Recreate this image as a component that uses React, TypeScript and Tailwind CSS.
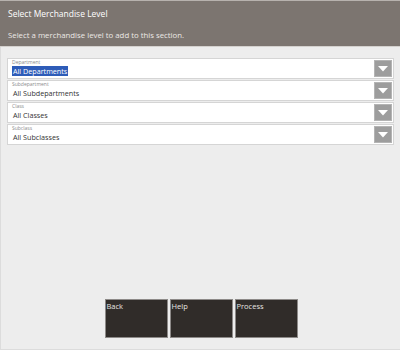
import React from "react";

const FIELDS = [
  { label: "Department", value: "All Departments", selected: true },
  { label: "Subdepartment", value: "All Subdepartments" },
  { label: "Class", value: "All Classes" },
  { label: "Subclass", value: "All Subclasses" },
];

const BUTTONS = ["Back", "Help", "Process"];

export default function App() {
  return (
    <div
      className="w-[400px] h-[350px] flex flex-col bg-[#ededed] overflow-hidden"
      style={{ fontFamily: '"Open Sans", "Noto Sans", sans-serif' }}
    >
      {/* Header */}
      <div className="h-[1px] bg-[#b7b2ae]" />
      <div className="h-[45px] bg-[#7c7570] px-[8px] flex flex-col">
        <div className="text-[8.5px] leading-none text-white font-medium mt-[9px]">Select Merchandise Level</div>
        <div className="text-[7.8px] leading-none text-[#ece9e6] mt-[13px]">
          Select a merchandise level to add to this section.
        </div>
      </div>
      <div className="h-[1px] bg-[#d4d1ce]" />

      {/* Body */}
      <div className="flex-1 flex flex-col border-l border-b border-[#dcdcdc]">
        <div className="flex flex-col gap-[1px] mt-[11px] pl-[6px] pr-[6px]">
          {FIELDS.map((f) => (
            <div
              key={f.label}
              className="h-[21px] bg-white border border-[#d5d5d5] flex items-center pl-[4px] pr-[1px]"
            >
              <div className="flex-1 flex flex-col">
                <span className="text-[5px] leading-none text-[#8a8a8a] -mt-[2px]">{f.label}</span>
                <span className="text-[7.2px] leading-none mt-[3px]">
                  <span className={f.selected ? "bg-[#2e5cb8] text-white px-[1px]" : "text-[#333] px-[1px]"}>
                    {f.value}
                  </span>
                </span>
              </div>
              <div className="w-[18px] h-[17px] bg-[#9d9d9d] border border-[#b4b4b4] flex items-center justify-center">
                <svg width="10" height="6" viewBox="0 0 10 6">
                  <path d="M0 0 H10 L5 5.5 Z" fill="#ffffff" />
                </svg>
              </div>
            </div>
          ))}
        </div>

        <div className="flex-1" />

        <div className="flex justify-center gap-[2px] mb-[11px] pl-[1px]">
          {BUTTONS.map((b) => (
            <div
              key={b}
              className="w-[63px] h-[39px] bg-[#302c29] border border-[#8d8a88] text-[7.5px] leading-none text-[#e6e4e2] pl-[1px] pt-[3px]"
            >
              {b}
            </div>
          ))}
        </div>
      </div>
    </div>
  );
}
